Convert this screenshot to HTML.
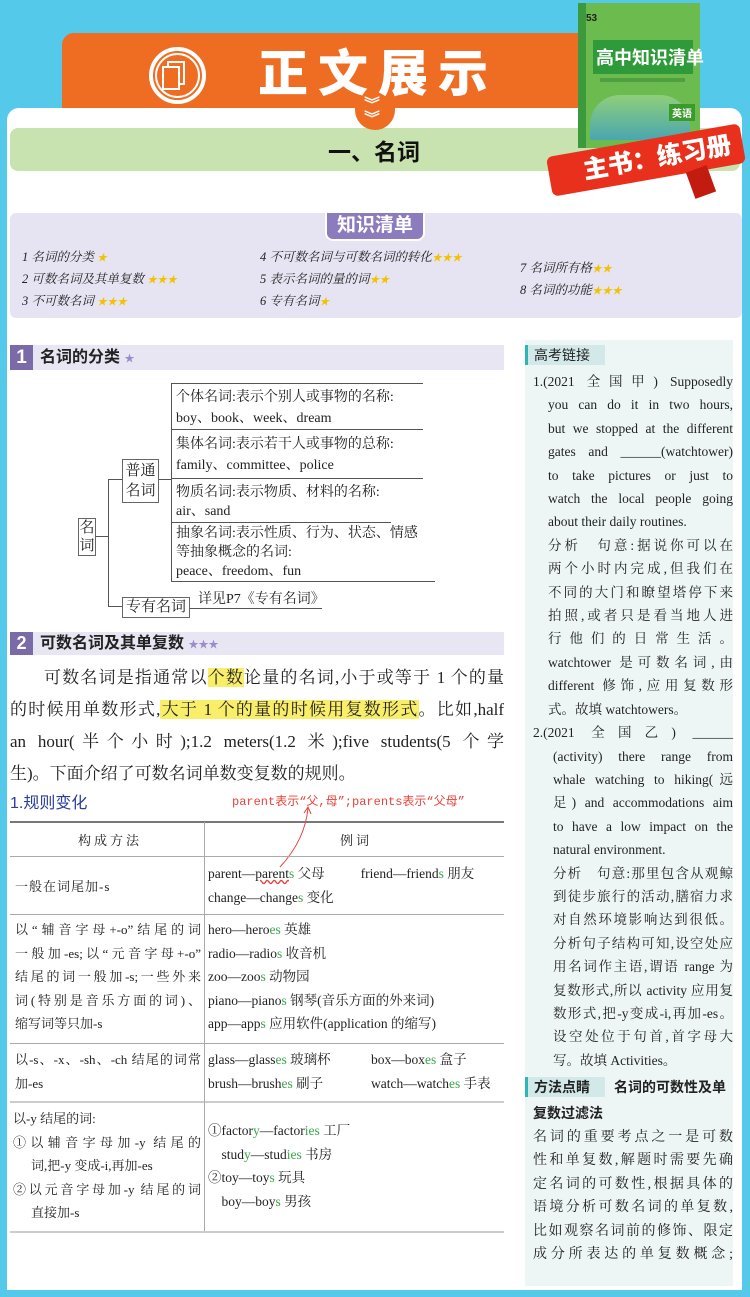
<!DOCTYPE html>
<html><head><meta charset="utf-8">
<style>
*{margin:0;padding:0;box-sizing:border-box}
body{width:750px;height:1297px;background:#55c9e9;position:relative;overflow:hidden;font-family:"Liberation Serif","Noto Serif CJK SC",serif;color:#222}
.a{position:absolute}
.sans{font-family:"Liberation Sans","Noto Sans CJK SC",sans-serif}
.j{text-align:justify;text-align-last:justify;white-space:nowrap}
.g{color:#3aa64a}
.star{color:#f2c200;font-size:10px}
.pstar{color:#9a8ccc;font-size:10px}
.hl{background:#f8ee6a}
.row{position:absolute;left:10px;width:494px;border-top:1px solid #aaa}
</style></head><body>
<div class="a" style="left:62px;top:33px;width:540px;height:80px;background:#ee6d22;border-radius:12px 0 0 0"></div>
<div class="a" style="left:149px;top:47px;width:57px;height:57px;border:4px solid #fff;border-radius:50%"></div>
<div class="a" style="left:155px;top:53px;width:45px;height:45px;border:2px solid #fff;border-radius:50%"></div>
<div class="a" style="left:167px;top:61px;width:18px;height:24px;border:2px solid #fff"></div>
<div class="a" style="left:162px;top:66px;width:18px;height:24px;border:2px solid #fff;background:#ee6d22"></div>
<div class="a sans" style="left:258px;top:42px;font-size:50px;font-weight:900;color:#fff;letter-spacing:10px;line-height:64px">正文展示</div>
<div class="a" style="left:7px;top:108px;width:735px;height:1182px;background:#fff;border-radius:12px 12px 0 0"></div>
<div class="a" style="left:10px;top:128px;width:730px;height:43px;background:#c8e2b0;border-radius:8px"></div>
<div class="a" style="left:355px;top:100px;width:40px;height:30px;background:#ee6d22;border-radius:0 0 20px 20px"></div>
<div class="a sans" style="left:364px;top:99px;color:#fff;font-size:16px;font-weight:bold;line-height:14px">︾<br>︾</div>
<div class="a sans" style="left:328px;top:133px;font-size:23px;font-weight:bold;color:#111">一、名词</div>
<div class="a" style="left:578px;top:3px;width:122px;height:145px;background:#6bbb4e;border-left:8px solid #3d9a3c"></div>
<div class="a" style="left:593px;top:40px;width:100px;height:34px;background:#2f9a3a"></div>
<div class="a sans" style="left:596px;top:46px;color:#fff;font-size:18px;font-weight:bold;line-height:24px;white-space:nowrap">高中知识清单</div>
<div class="a" style="left:600px;top:78px;width:85px;height:4px;background:#4ea040"></div>
<div class="a sans" style="left:586px;top:13px;color:#222;font-size:10px;font-weight:bold">53</div>
<div class="a" style="left:590px;top:95px;width:100px;height:45px;background:linear-gradient(#8fcf7a,#4aa6b0);border-radius:30px 30px 0 0"></div>
<div class="a sans" style="left:669px;top:104px;background:#3a9a2c;color:#fff;font-size:10px;padding:1px 3px;font-weight:bold">英语</div>
<div class="a" style="left:548px;top:140px;width:196px;height:40px;background:#e8301c;transform:rotate(-10deg);border-radius:6px"></div>
<div class="a" style="left:690px;top:168px;width:22px;height:28px;background:#c21c10;transform:rotate(-20deg)"></div>
<div class="a sans" style="left:582px;top:138px;color:#fff;font-size:25px;font-weight:900;transform:rotate(-10deg)">主书：练习册</div>
<div class="a" style="left:10px;top:213px;width:732px;height:105px;background:#e6e4f2;border-radius:6px"></div>
<div class="a sans" style="left:325px;top:213px;width:100px;height:28px;background:#8c7bbd;border:2px solid #fff;border-top:none;border-radius:0 0 8px 8px;color:#fff;font-weight:bold;font-size:19px;text-align:center;line-height:26px">知识清单</div>
<div class="a" style="font-size:12.5px;line-height:21px;left:22px;top:247px;font-style:italic">1 名词的分类 <span class="star">★</span><br>2 可数名词及其单复数 <span class="star">★★★</span><br>3 不可数名词 <span class="star">★★★</span></div>
<div class="a" style="font-size:12.5px;line-height:21px;left:260px;top:247px;font-style:italic">4 不可数名词与可数名词的转化<span class="star">★★★</span><br>5 表示名词的量的词<span class="star">★★</span><br>6 专有名词<span class="star">★</span></div>
<div class="a" style="font-size:12.5px;line-height:21px;left:520px;top:258px;font-style:italic">7 名词所有格<span class="star">★★</span><br>8 名词的功能<span class="star">★★★</span></div>
<div class="a" style="left:10px;top:345px;width:494px;height:25px;background:#e8e6f2"></div>
<div class="a sans" style="left:10px;top:345px;width:23px;height:25px;background:#7a6aa8;color:#fff;font-weight:bold;font-size:19px;text-align:center;line-height:25px">1</div>
<div class="a sans" style="left:40px;top:345px;font-size:16px;font-weight:bold;line-height:25px">名词的分类 <span class="pstar">★</span></div>
<div class="a" style="left:78px;top:518px;width:18px;height:38px;border:1px solid #666;font-size:15px;line-height:18px;text-align:center">名词</div>
<div class="a" style="left:96px;top:536px;width:12px;border-top:1px solid #555"></div>
<div class="a" style="left:108px;top:479px;height:128px;border-left:1px solid #555"></div>
<div class="a" style="left:108px;top:479px;width:14px;border-top:1px solid #555"></div>
<div class="a" style="left:108px;top:606px;width:14px;border-top:1px solid #555"></div>
<div class="a" style="left:122px;top:459px;width:37px;height:44px;border:1px solid #666;font-size:15px;line-height:20px;text-align:center;padding-top:1px">普通名词</div>
<div class="a" style="left:159px;top:479px;width:12px;border-top:1px solid #555"></div>
<div class="a" style="left:171px;top:383px;height:199px;border-left:1px solid #555"></div>
<div class="a" style="left:171px;top:383px;width:252px;border-top:1px solid #555"></div>
<div class="a" style="left:171px;top:429px;width:252px;border-top:1px solid #555"></div>
<div class="a" style="left:171px;top:478px;width:252px;border-top:1px solid #555"></div>
<div class="a" style="left:171px;top:522px;width:220px;border-top:1px solid #555"></div>
<div class="a" style="left:171px;top:581px;width:264px;border-top:1px solid #555"></div>
<div class="a" style="left:176px;top:387px;font-size:14px;line-height:21px">个体名词:表示个别人或事物的名称:<br>boy、book、week、dream</div>
<div class="a" style="left:176px;top:434px;font-size:14px;line-height:21px">集体名词:表示若干人或事物的总称:<br>family、committee、police</div>
<div class="a" style="left:176px;top:483px;font-size:14px;line-height:19px">物质名词:表示物质、材料的名称:<br>air、sand</div>
<div class="a" style="left:176px;top:524px;font-size:14px;line-height:19px">抽象名词:表示性质、行为、状态、情感<br>等抽象概念的名词:<br>peace、freedom、fun</div>
<div class="a" style="left:122px;top:597px;width:68px;height:21px;border:1px solid #666;font-size:15px;line-height:19px;text-align:center">专有名词</div>
<div class="a" style="left:190px;top:608px;width:132px;border-top:1px solid #555"></div>
<div class="a" style="left:198px;top:588px;font-size:14px">详见P7《专有名词》</div>
<div class="a" style="left:10px;top:632px;width:494px;height:23px;background:#e8e6f2"></div>
<div class="a sans" style="left:10px;top:632px;width:23px;height:23px;background:#7a6aa8;color:#fff;font-weight:bold;font-size:18px;text-align:center;line-height:23px">2</div>
<div class="a sans" style="left:40px;top:632px;font-size:16px;font-weight:bold;line-height:23px">可数名词及其单复数 <span class="pstar">★★★</span></div>
<div class="a" style="left:10px;top:662px;width:494px;font-size:17px;line-height:32px">
<div class="j" style="text-indent:34px">可数名词是指通常以<span class="hl">个数</span>论量的名词,小于或等于 1 个的量</div>
<div class="j">的时候用单数形式,<span class="hl">大于 1 个的量的时候用复数形式</span>。比如,half</div>
<div class="j">an hour(半个小时);1.2 meters(1.2 米);five students(5 个学</div>
<div>生)。下面介绍了可数名词单数变复数的规则。</div>
</div>
<div class="a sans" style="left:10px;top:789px;font-size:16px;color:#2a3e9c">1.规则变化</div>
<div class="a" style="left:232px;top:792px;font-size:12px;color:#e8423a;font-family:'Liberation Mono','Noto Sans CJK SC',monospace">parent表示“父,母”;parents表示“父母”</div>
<svg class="a" style="left:270px;top:805px" width="50" height="65"><path d="M38 3 Q35 35 10 62" stroke="#e8423a" fill="none" stroke-width="1"/><path d="M34 8 L38 2 L41 9" stroke="#e8423a" fill="none"/></svg>
<div class="row" style="top:821px;border-top:2px solid #777"></div>
<div class="row" style="top:856px"></div>
<div class="row" style="top:914px"></div>
<div class="row" style="top:1043px"></div>
<div class="row" style="top:1101px;border-top:2px solid #ccc"></div>
<div class="row" style="top:1231px;border-top:2px solid #ccc"></div>
<div class="a" style="left:204px;top:822px;height:409px;border-left:1px solid #aaa"></div>
<div class="a" style="font-size:13px;left:78px;top:830px;letter-spacing:3px">构成方法</div>
<div class="a" style="font-size:13px;left:340px;top:830px;letter-spacing:3px">例词</div>
<div class="a" style="font-size:13px;left:15px;top:876px;letter-spacing:1px">一般在词尾加-s</div>
<div class="a" style="font-size:13.5px;left:208px;top:862px;line-height:23.5px;width:296px">parent—<span style="text-decoration:underline wavy #e8423a">parent</span><span class="g">s</span> 父母<span style="margin-left:36px">friend—friend<span class="g">s</span> 朋友</span><br>change—change<span class="g">s</span> 变化</div>
<div class="a" style="font-size:13px;left:15px;top:918px;line-height:23.5px;width:186px"><div class="j">以“辅音字母+-o”结尾的词</div><div class="j">一般加-es;以“元音字母+-o”</div><div class="j">结尾的词一般加-s;一些外来</div><div class="j">词(特别是音乐方面的词)、</div><div>缩写词等只加-s</div></div>
<div class="a" style="font-size:13.5px;left:208px;top:918px;line-height:23.5px">hero—hero<span class="g">es</span> 英雄<br>radio—radio<span class="g">s</span> 收音机<br>zoo—zoo<span class="g">s</span> 动物园<br>piano—piano<span class="g">s</span> 钢琴(音乐方面的外来词)<br>app—app<span class="g">s</span> 应用软件(application 的缩写)</div>
<div class="a" style="font-size:13px;left:15px;top:1048px;line-height:23.5px;width:186px"><div class="j">以-s、-x、-sh、-ch 结尾的词常</div><div>加-es</div></div>
<div class="a" style="font-size:13.5px;left:208px;top:1048px;line-height:23.5px">glass—glass<span class="g">es</span> 玻璃杯<br>brush—brush<span class="g">es</span> 刷子</div>
<div class="a" style="font-size:13.5px;left:371px;top:1048px;line-height:23.5px">box—box<span class="g">es</span> 盒子<br>watch—watch<span class="g">es</span> 手表</div>
<div class="a" style="font-size:13px;left:13px;top:1107px;line-height:23.5px;width:188px"><div>以-y 结尾的词:</div><div class="j">①以辅音字母加-y 结尾的</div><div style="padding-left:18px">词,把-y 变成-i,再加-es</div><div class="j">②以元音字母加-y 结尾的词</div><div style="padding-left:18px">直接加-s</div></div>
<div class="a" style="font-size:13.5px;left:208px;top:1119px;line-height:23.5px">①factor<span class="g">y</span>—factor<span class="g">ies</span> 工厂<br>&nbsp;&nbsp;&nbsp;&nbsp;stud<span class="g">y</span>—stud<span class="g">ies</span> 书房<br>②toy—toy<span class="g">s</span> 玩具<br>&nbsp;&nbsp;&nbsp;&nbsp;boy—boy<span class="g">s</span> 男孩</div>
<div class="a" style="left:525px;top:340px;width:208px;height:946px;background:#eef5f5"></div>
<div class="a sans" style="left:525px;top:345px;width:80px;height:20px;background:#d3e8e8;border-left:3px solid #2fb5b8;font-size:14px;line-height:20px;padding-left:6px">高考链接</div>
<div class="a" style="left:533px;top:370px;width:200px;font-size:13.5px;line-height:23.4px">
<div class="j">1.(2021 全国甲) Supposedly</div>
<div style="padding-left:15px">
<div class="j">you can do it in two hours,</div>
<div class="j">but we stopped at the different</div>
<div class="j">gates and ______(watchtower)</div>
<div class="j">to take pictures or just to</div>
<div class="j">watch the local people going</div>
<div>about their daily routines.</div>
<div class="j">分析　句意:据说你可以在</div>
<div class="j">两个小时内完成,但我们在</div>
<div class="j">不同的大门和瞭望塔停下来</div>
<div class="j">拍照,或者只是看当地人进</div>
<div class="j">行他们的日常生活。</div>
<div class="j">watchtower 是可数名词,由</div>
<div class="j">different 修饰,应用复数形</div>
<div>式。故填 watchtowers。</div>
</div>
<div class="j">2.(2021 全国乙) ______</div>
<div style="padding-left:20px">
<div class="j">(activity) there range from</div>
<div class="j">whale watching to hiking(远</div>
<div class="j">足) and accommodations aim</div>
<div class="j">to have a low impact on the</div>
<div>natural environment.</div>
<div class="j">分析　句意:那里包含从观鲸</div>
<div class="j">到徒步旅行的活动,膳宿力求</div>
<div class="j">对自然环境影响达到很低。</div>
<div class="j">分析句子结构可知,设空处应</div>
<div class="j">用名词作主语,谓语 range 为</div>
<div class="j">复数形式,所以 activity 应用复</div>
<div class="j">数形式,把-y变成-i,再加-es。</div>
<div class="j">设空处位于句首,首字母大</div>
<div>写。故填 Activities。</div>
</div></div>
<div class="a sans" style="left:525px;top:1077px;width:80px;height:20px;background:#d3e8e8;border-left:3px solid #2fb5b8;font-size:14px;line-height:20px;padding-left:6px;font-weight:bold">方法点睛</div>
<div class="a sans" style="left:614px;top:1077px;font-size:14px;line-height:20px;font-weight:bold">名词的可数性及单</div>
<div class="a sans" style="left:533px;top:1103px;font-size:14px;line-height:20px;font-weight:bold">复数过滤法</div>
<div class="a" style="left:533px;top:1126px;width:200px;font-size:14px;line-height:23.4px">
<div class="j">名词的重要考点之一是可数</div>
<div class="j">性和单复数,解题时需要先确</div>
<div class="j">定名词的可数性,根据具体的</div>
<div class="j">语境分析可数名词的单复数,</div>
<div class="j">比如观察名词前的修饰、限定</div>
<div class="j">成分所表达的单复数概念;</div>
</div>
</body></html>
